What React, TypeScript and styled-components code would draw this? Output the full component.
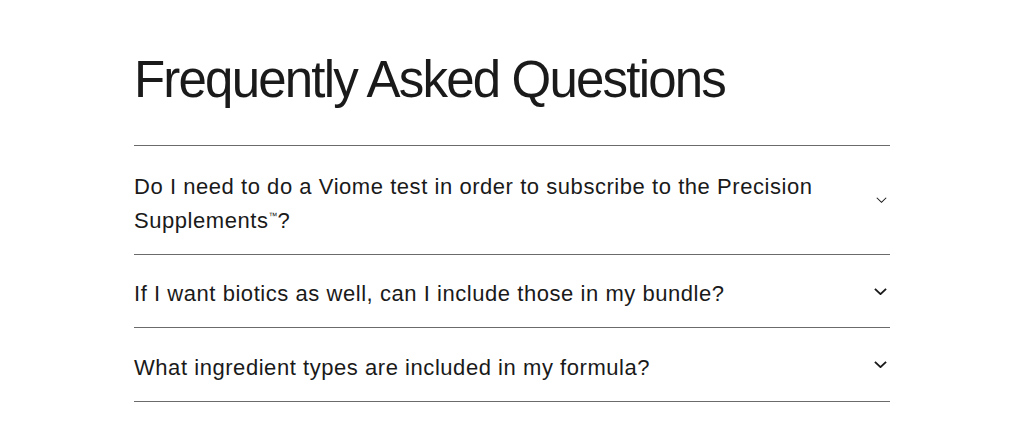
import React from "react";
import styled, { createGlobalStyle } from "styled-components";

const Global = createGlobalStyle`
  html, body { margin: 0; padding: 0; background: #fff; }
  body { font-family: "Liberation Sans", Arial, sans-serif; color: #1a1a1a; }
`;

const Page = styled.main`
  width: 756px;
  margin: 0 auto;
  padding-top: 52px;
`;

const Title = styled.h2`
  margin: 0 0 37px;
  font-size: 51px;
  font-weight: 400;
  line-height: 56px;
  letter-spacing: -1.8px;
  color: #1a1a1a;
`;

const List = styled.div`
  border-top: 1px solid #6b6b6b;
`;

const Item = styled.div`
  display: flex;
  align-items: center;
  justify-content: space-between;
  gap: 40px;
  border-bottom: 1px solid #6b6b6b;
`;

const Question = styled.span<{ $pt: number; $pb: number }>`
  padding: ${(p) => p.$pt}px 0 ${(p) => p.$pb}px;
  font-size: 22px;
  line-height: 34px;
  color: #1a1a1a;
  letter-spacing: 0.55px;
  max-width: 700px;
`;

const Tm = styled.span`
  font-size: 9px;
  line-height: 0;
  letter-spacing: 0;
  position: relative;
  top: -9px;
`;

const Chevron = styled.svg`
  flex: none;
  margin-right: 3px;
`;

const items = [
  {
    q: (
      <>
        Do I need to do a Viome test in order to subscribe to the Precision Supplements<Tm>™</Tm>?
      </>
    ),
    small: true,
    pt: 24,
    pb: 16,
  },
  { q: "If I want biotics as well, can I include those in my bundle?", small: false, pt: 22, pb: 16 },
  { q: "What ingredient types are included in my formula?", small: false, pt: 23, pb: 16 },
];

export default function App() {
  return (
    <>
      <Global />
      <Page>
        <Title>Frequently Asked Questions</Title>
        <List>
          {items.map((it, i) => (
            <Item key={i}>
              <Question $pt={it.pt} $pb={it.pb}>
                {it.q}
              </Question>
              <Chevron
                width={it.small ? 11 : 13}
                height={it.small ? 6 : 7}
                viewBox="0 0 14 8"
                fill="none"
                preserveAspectRatio="none"
              >
                <path d="M1 1l6 6 6-6" stroke="#1a1a1a" strokeWidth={it.small ? 1.4 : 2} />
              </Chevron>
            </Item>
          ))}
        </List>
      </Page>
    </>
  );
}
